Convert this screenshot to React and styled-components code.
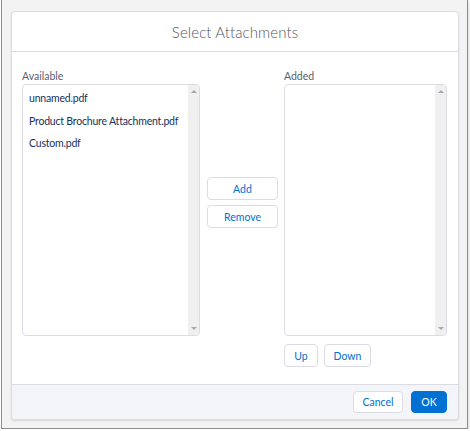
import React from "react";
import styled, { createGlobalStyle } from "styled-components";

const GlobalStyle = createGlobalStyle`
  html, body {
    margin: 0;
    padding: 0;
    background: #ffffff;
  }
  body {
    font-family: Lato, "Open Sans", "Liberation Sans", sans-serif;
  }
`;

const Frame = styled.div`
  box-sizing: border-box;
  width: 467px;
  height: 429px;
  margin-left: 1px;
  padding: 11px 8px 8px 9px;
  background: #f3f3f4;
  border: 1px solid #8e8e8e;
  border-top: none;
  box-shadow: 1px 1px 2px rgba(0, 0, 0, 0.15);
`;

const Modal = styled.div`
  box-sizing: border-box;
  height: 409px;
  display: flex;
  flex-direction: column;
  background: #fff;
  border: 1px solid #dddbe3;
  border-radius: 4px;
  box-shadow: 0 1px 2px rgba(0, 0, 0, 0.12);
  overflow: hidden;
`;

const Header = styled.div`
  height: 39px;
  display: flex;
  align-items: center;
  justify-content: center;
  border-bottom: 1px solid #dddbe3;
  h2 {
    margin: 0;
    font-size: 15px;
    font-weight: 300;
    color: #54585e;
    letter-spacing: 0.1px;
  }
`;

const Body = styled.div`
  flex: 1;
  display: flex;
  align-items: flex-start;
  padding: 17px 10px 0 10px;
`;

const Column = styled.div`
  display: flex;
  flex-direction: column;
  width: ${(p) => p.width}px;
`;

const Label = styled.div`
  height: 14px;
  font-size: 10.5px;
  color: #5a6170;
  line-height: 14px;
`;

const ListBox = styled.div`
  box-sizing: border-box;
  margin-top: 1px;
  height: 252px;
  display: flex;
  border: 1px solid #dddbe3;
  border-radius: 4px;
  overflow: hidden;
`;

const Items = styled.ul`
  flex: 1;
  list-style: none;
  margin: 0;
  padding: 2px 0 0 6px;
`;

const Item = styled.li`
  height: 22.5px;
  line-height: 22.5px;
  font-size: 10.5px;
  letter-spacing: -0.2px;
  color: #16325c;
  white-space: nowrap;
`;

const Scrollbar = styled.div`
  width: 11px;
  background: #f0f0f0;
  display: flex;
  flex-direction: column;
  justify-content: space-between;
  align-items: center;
  padding: 5px 0;
`;

const Arrow = styled.span`
  width: 0;
  height: 0;
  border-left: 3px solid transparent;
  border-right: 3px solid transparent;
  ${(p) =>
    p.down
      ? "border-top: 3px solid #a8a8a8;"
      : "border-bottom: 3px solid #a8a8a8;"}
`;

const Middle = styled.div`
  width: 71px;
  margin: 0 6px 0 7px;
  height: 267px;
  display: flex;
  flex-direction: column;
  justify-content: center;
  gap: 5px;
`;

const Button = styled.button`
  box-sizing: border-box;
  height: ${(p) => p.h || 23}px;
  width: ${(p) => (p.w ? `${p.w}px` : "auto")};
  padding: 0;
  font-family: inherit;
  font-size: 10.5px;
  border-radius: 4px;
  border: 1px solid ${(p) => (p.brand ? "#0070d2" : "#dddbe3")};
  background: ${(p) => (p.brand ? "#0070d2" : "#fff")};
  color: ${(p) => (p.brand ? "#fff" : "#0070d2")};
  cursor: pointer;
`;

const ButtonRow = styled.div`
  display: flex;
  gap: ${(p) => p.gap}px;
  margin-top: ${(p) => p.top || 0}px;
  justify-content: ${(p) => p.justify || "flex-start"};
`;

const Footer = styled.div`
  height: 35px;
  box-sizing: border-box;
  border-top: 1px solid #dddbe3;
  background: #f4f5f9;
  display: flex;
  align-items: center;
  justify-content: flex-end;
  padding: 0 11px 1px 0;
`;

const available = ["unnamed.pdf", "Product Brochure Attachment.pdf", "Custom.pdf"];

const DualList = ({ items }) => (
  <ListBox>
    <Items>
      {items.map((name) => (
        <Item key={name}>{name}</Item>
      ))}
    </Items>
    <Scrollbar>
      <Arrow />
      <Arrow down />
    </Scrollbar>
  </ListBox>
);

export default function App() {
  return (
    <>
      <GlobalStyle />
      <Frame>
        <Modal>
          <Header>
            <h2>Select Attachments</h2>
          </Header>
          <Body>
            <Column width={178}>
              <Label>Available</Label>
              <DualList items={available} />
            </Column>
            <Middle>
              <Button h={23}>Add</Button>
              <Button h={23}>Remove</Button>
            </Middle>
            <Column width={163}>
              <Label>Added</Label>
              <DualList items={[]} />
              <ButtonRow gap={6} top={8}>
                <Button w={34}>Up</Button>
                <Button w={47}>Down</Button>
              </ButtonRow>
            </Column>
          </Body>
          <Footer>
            <ButtonRow gap={8}>
              <Button w={50} h={22}>Cancel</Button>
              <Button w={36} h={22} brand>OK</Button>
            </ButtonRow>
          </Footer>
        </Modal>
      </Frame>
    </>
  );
}
